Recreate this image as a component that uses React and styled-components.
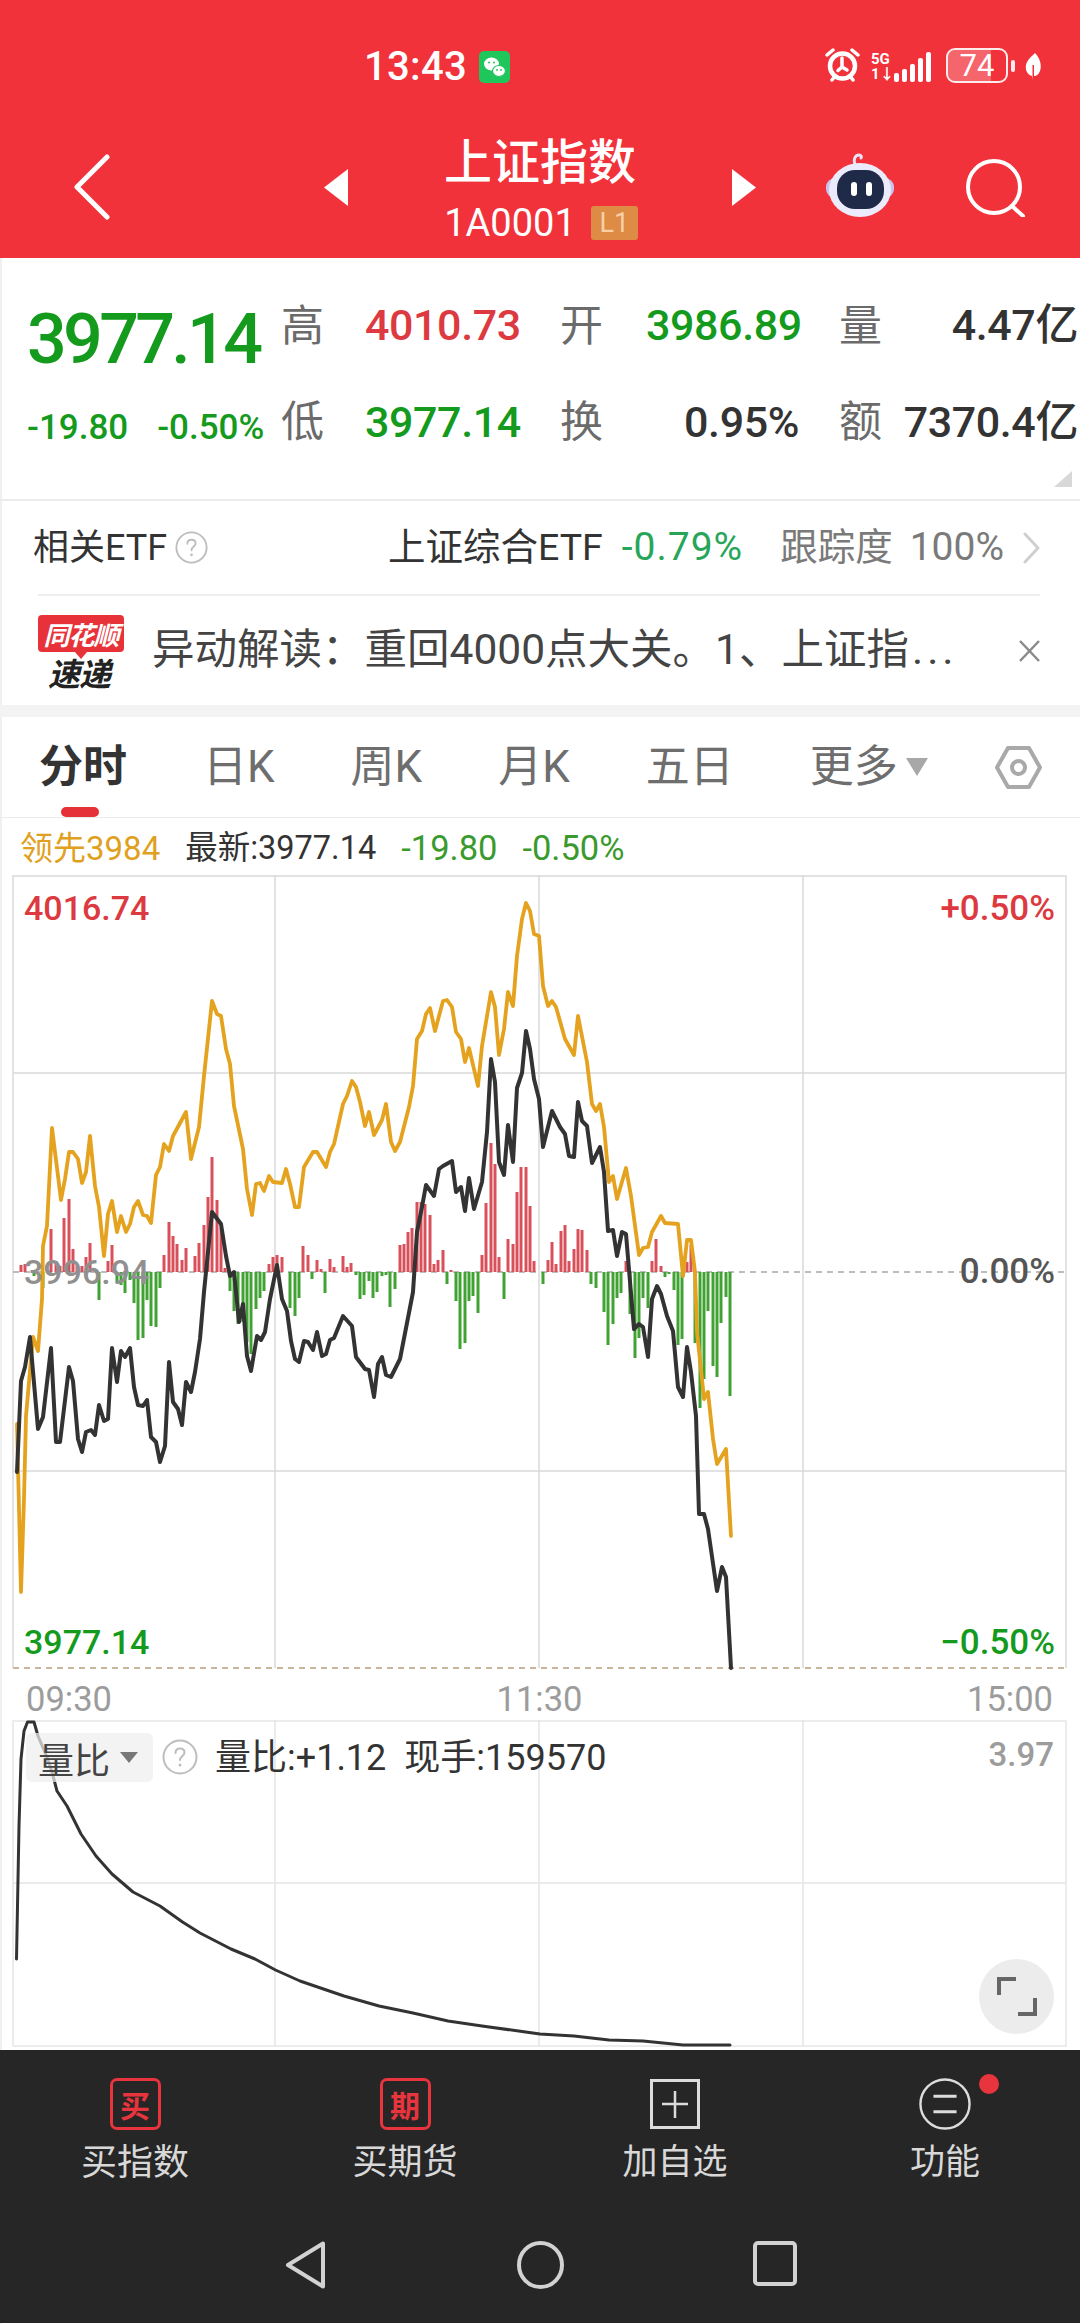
import React from "react";
import styled, { createGlobalStyle } from "styled-components";

const FONT = `Roboto, "Noto Sans CJK SC", sans-serif`;

const Global = createGlobalStyle`
  html, body { margin: 0; padding: 0; background: #fff; }
  body { font-family: ${FONT}; }
  * { box-sizing: border-box; }
`;

const GREEN = "#149a1c";
const RED = "#dc3a40";

const gold = "17,1425 21,1593 24,1500 26,1417 33,1338 38,1352 42,1300 43,1247 47,1227 52,1129 61,1201 65,1180 69,1153 73,1153 78,1160 82,1184 86,1173 90,1137 95,1187 99,1208 104,1257 108,1215 112,1202 117,1233 121,1217 126,1233 130,1225 134,1208 138,1202 143,1216 147,1217 151,1224 156,1176 160,1168 164,1145 169,1152 173,1137 186,1113 191,1160 199,1128 204,1077 212,1002 217,1015 221,1017 226,1050 230,1065 234,1107 243,1150 247,1190 252,1216 256,1185 260,1184 264,1192 269,1177 273,1183 282,1184 286,1170 290,1185 295,1208 299,1208 304,1168 313,1153 317,1153 326,1168 330,1153 334,1145 343,1105 347,1097 352,1082 356,1088 360,1103 365,1127 369,1113 374,1136 382,1121 386,1105 391,1143 395,1152 400,1143 409,1108 413,1087 417,1040 422,1032 426,1015 430,1009 435,1032 443,1002 447,1001 452,1008 456,1033 461,1040 465,1063 469,1049 478,1087 482,1047 491,993 495,1008 499,1056 504,1030 508,993 513,1007 517,957 522,920 526,904 530,912 534,935 539,937 543,987 548,1007 552,1002 556,1008 565,1040 574,1056 578,1017 587,1063 592,1105 596,1112 600,1105 604,1128 609,1183 613,1177 617,1200 626,1169 631,1197 639,1256 643,1249 648,1248 652,1233 661,1217 665,1224 678,1225 683,1277 687,1241 691,1241 695,1273 697,1333 702,1380 704,1400 708,1393 713,1440 717,1465 726,1450 731,1537";

const black = "17,1473 21,1382 25,1368 30,1338 38,1430 43,1418 51,1349 56,1443 60,1443 69,1368 73,1382 78,1440 82,1453 86,1433 91,1431 95,1436 99,1406 104,1422 108,1420 112,1349 117,1383 121,1352 125,1358 130,1349 134,1388 138,1406 143,1407 147,1401 151,1438 156,1443 160,1463 165,1447 169,1363 173,1403 178,1410 182,1426 186,1383 191,1393 195,1373 200,1340 204,1293 212,1213 221,1225 226,1257 230,1277 234,1273 239,1323 243,1305 247,1357 251,1372 257,1337 261,1341 265,1333 270,1300 277,1266 282,1300 287,1312 291,1342 295,1360 299,1363 304,1342 308,1343 313,1351 317,1333 322,1357 326,1355 330,1341 334,1339 343,1317 352,1327 356,1358 365,1370 369,1371 374,1398 378,1365 382,1358 386,1376 391,1378 400,1360 413,1293 417,1233 422,1208 426,1186 434,1197 439,1170 443,1167 452,1162 456,1193 461,1188 465,1212 469,1179 474,1210 482,1183 487,1133 491,1060 495,1083 499,1163 504,1176 508,1126 513,1163 517,1089 522,1074 526,1032 530,1050 534,1080 539,1100 543,1148 552,1112 560,1128 565,1135 569,1157 574,1158 578,1103 582,1122 587,1127 592,1164 600,1148 604,1173 608,1232 613,1231 617,1257 622,1233 626,1235 634,1330 639,1325 643,1328 648,1358 652,1300 657,1287 661,1295 667,1317 673,1332 678,1388 683,1398 687,1348 691,1373 696,1417 699,1515 704,1515 708,1530 717,1592 722,1568 726,1578 731,1669";

const ratio = "16.5,1960 19,1827 21,1760 24,1732 27.5,1723 34,1723 38,1737 46.5,1757 52,1773 57,1792 67,1807 81,1835 96,1857 112,1875 133,1893 160,1907 182.5,1923 200,1934 231,1950 255,1960 275.5,1971 300,1982 344,1997 379,2007 413,2014 448,2022 482,2027 540,2035 574,2037 609,2041 643,2042 683,2046 730,2046";

const bars = [
  [21,7],[25,8],[34,-4],[43,-16],[51,43],[56,11],[60,6],[64,54],[69,73],[73,23],[77,6],[82,6],[86,15],[90,29],[95,3],[99,-28],[108,11],[112,27],[117,-11],[121,-13],[125,-21],[130,-8],[134,-31],[138,-68],[143,-66],[147,-28],[151,-54],[156,-55],[160,-16],[164,17],[169,50],[173,36],[177,28],[182,12],[186,24],[195,16],[199,29],[204,47],[208,75],[212,115],[217,72],[221,44],[225,4],[230,-19],[234,-39],[238,-52],[243,-50],[247,-70],[251,-82],[256,-37],[260,-26],[264,-19],[269,8],[273,15],[277,17],[282,15],[290,-36],[295,-44],[299,-26],[303,26],[308,17],[312,-7],[317,12],[321,3],[325,-21],[330,13],[334,5],[343,16],[347,5],[351,9],[356,-3],[360,-27],[364,-23],[369,-9],[373,-26],[377,-20],[382,-4],[386,-3],[390,-35],[395,-17],[400,27],[404,28],[408,40],[412,44],[417,70],[421,70],[425,68],[430,57],[434,8],[438,12],[443,22],[447,-12],[451,2],[456,-29],[460,-77],[465,-71],[469,-29],[473,-24],[478,-41],[482,17],[486,69],[491,129],[495,108],[499,15],[504,-27],[508,33],[513,28],[517,80],[521,105],[526,105],[530,66],[534,11],[543,-12],[548,12],[552,30],[556,8],[561,41],[565,47],[569,11],[574,23],[578,43],[582,42],[587,22],[591,-12],[596,-16],[604,-40],[608,-73],[613,-52],[617,-26],[621,-21],[626,11],[630,-42],[635,-86],[639,-66],[643,-26],[648,-36],[652,11],[656,33],[661,6],[665,-5],[669,-2],[674,-18],[678,-73],[682,-67],[687,10],[691,27],[695,-71],[700,-136],[704,-107],[708,-39],[713,-94],[717,-105],[721,-51],[726,-25],[730,-124],
];

const Page = styled.div`
  width: 1080px;
  height: 2324px;
  display: flex;
  flex-direction: column;
  background: #fff;
  overflow: hidden;
  box-shadow: inset 2px 0 0 #f0f0f0;
`;
const Header = styled.header`
  height: 258px;
  flex: none;
  background: #f1323b;
  color: #fff;
`;
const StatusBar = styled.div`
  height: 118px;
  display: flex;
  align-items: flex-start;
  padding: 47px 39px 0 364px;
`;
const Clock = styled.span`
  font: 500 40px/40px ${FONT};
  letter-spacing: 0.3px;
`;
const StatusLeftIcon = styled.svg`
  margin: 4px 0 0 12px;
`;
const StatusRight = styled.div`
  margin-left: auto;
  display: flex;
  align-items: flex-start;
`;
const NetStack = styled.div`
  display: flex;
  flex-direction: column;
  width: 22px;
  margin: 5px 0 0 11px;
  font: 700 15px/15px ${FONT};
`;
const SignalIcon = styled.svg`
  margin: 4px 0 0 -2px;
`;
const Battery = styled.div`
  position: relative;
  margin: 1px 0 0 13px;
  width: 62px;
  height: 35px;
  border: 2.5px solid rgba(255, 255, 255, 0.9);
  border-radius: 9px;
  display: flex;
  align-items: center;
  justify-content: center;
  font: 400 31px/1 ${FONT};
  overflow: hidden;
`;
const BatteryFill = styled.i`
  position: absolute;
  left: 0;
  top: 0;
  bottom: 0;
  background: rgba(255, 255, 255, 0.25);
`;
const BatteryText = styled.span`
  position: relative;
`;
const BatteryTip = styled.i`
  width: 4px;
  height: 12px;
  margin: 13px 0 0 3px;
  background: rgba(255, 255, 255, 0.9);
  border-radius: 2px;
`;
const LeafIcon = styled.svg`
  margin: 6px 0 0 10px;
`;
const NavBar = styled.div`
  height: 140px;
  display: grid;
  grid-template-columns: 324px 432px 324px;
`;
const BackCell = styled.div`
  padding: 36px 0 0 72px;
`;
const CenterCell = styled.div`
  display: flex;
  justify-content: space-between;
  align-items: flex-start;
`;
const Arrow = styled.svg`
  margin-top: 51px;
`;
const TitleBlock = styled.div`
  display: flex;
  flex-direction: column;
  align-items: center;
  padding-top: 11px;
`;
const Title = styled.div`
  font: 500 48px/58px "Noto Sans CJK SC", sans-serif;
`;
const CodeRow = styled.div`
  display: flex;
  align-items: center;
  gap: 15px;
  margin-top: 19px;
  height: 34px;
  padding-left: 2px;
`;
const Code = styled.span`
  font: 400 38px/34px ${FONT};
`;
const LevelBadge = styled.span`
  width: 47px;
  height: 34px;
  border-radius: 3px;
  background: #dd8b45;
  color: #f7cfa8;
  font: 400 27px/34px ${FONT};
  text-align: center;
`;
const ActionCell = styled.div`
  display: flex;
  align-items: flex-start;
  gap: 71px;
  padding: 34px 0 0 69px;
`;
const SearchIcon = styled.svg`
  margin-top: 7px;
`;

const Quote = styled.section`
  height: 243px;
  flex: none;
  position: relative;
  border-bottom: 2px solid #ececec;
  padding: 20px 0 0 27px;
  display: grid;
  grid-template-columns: 255px 83px 196px 85px 194px 60px 180px;
  grid-template-rows: 95px 98px;
  align-items: center;
`;
const BigPrice = styled.div`
  font: 500 70px/1 ${FONT};
  letter-spacing: -3.7px;
  color: ${GREEN};
  margin-top: 26px;
`;
const Deltas = styled.div`
  display: flex;
  gap: 29px;
  margin-top: 10px;
`;
const Delta = styled.span`
  font: 500 35px/1 ${FONT};
  color: ${GREEN};
`;
const FieldLabel = styled.div`
  font: 400 43px/1 "Noto Sans CJK SC", sans-serif;
  color: #6b6b6b;
  margin: -7px 0 0 -1px;
`;
const FieldValue = styled.div`
  font: 500 43px/1 ${FONT};
  letter-spacing: -0.4px;
  color: ${(p) => p.$color};
  text-align: ${(p) => (p.$left ? "left" : "right")};
  padding-right: ${(p) => p.$pr}px;
`;
const CornerMark = styled.svg`
  position: absolute;
  right: 8px;
  bottom: 12px;
`;

const EtfRow = styled.div`
  height: 93px;
  flex: none;
  display: flex;
  align-items: center;
  padding: 0 40px 0 33px;
  font: 400 36px/1 ${FONT};
  color: #333;
`;
const HelpIcon = styled.svg`
  margin-left: 8px;
  flex: none;
`;
const EtfRight = styled.div`
  margin-left: auto;
  display: flex;
  align-items: center;
  font-size: 37.5px;
`;
const EtfChange = styled.span`
  color: #27a65a;
  margin-left: 19px;
  font-size: 39px;
  letter-spacing: 1px;
`;
const EtfMuted = styled.span`
  color: #7a7a7a;
  margin-left: ${(p) => p.$ml}px;
  font-size: ${(p) => p.$size}px;
`;
const EtfChevron = styled.svg`
  margin-left: 19px;
`;
const Divider = styled.div`
  height: 2px;
  flex: none;
  margin: 0 40px 0 38px;
  background: #eeeeee;
`;
const NewsRow = styled.div`
  height: 109px;
  flex: none;
  display: flex;
  align-items: center;
  padding: 0 39px 0 38px;
`;
const Logo = styled.div`
  width: 86px;
  height: 71px;
  flex: none;
  display: flex;
  flex-direction: column;
  align-items: center;
  position: relative;
`;
const LogoBanner = styled.div`
  width: 86px;
  height: 37px;
  border-radius: 4px;
  background: #e8323a;
  color: #fff;
  font: italic 700 26px/37px "Noto Sans CJK SC", sans-serif;
  text-align: center;
  letter-spacing: -1px;
`;
const LogoTail = styled.i`
  width: 0;
  height: 0;
  border-left: 6px solid transparent;
  border-right: 6px solid transparent;
  border-top: 7px solid #e8323a;
`;
const LogoSub = styled.div`
  font: italic 700 32px/27px "Noto Sans CJK SC", sans-serif;
  color: #222;
  letter-spacing: -1px;
  margin-right: 4px;
`;
const NewsText = styled.div`
  margin-left: 28px;
  font: 400 42.5px/1 ${FONT};
  color: #444;
  white-space: nowrap;
`;
const NewsDots = styled.span`
  letter-spacing: 4px;
  margin-left: 3px;
`;
const NewsClose = styled.svg`
  margin-left: auto;
`;
const Band = styled.div`
  height: 12px;
  flex: none;
  background: #f3f3f3;
`;

const Tabs = styled.nav`
  height: 101px;
  flex: none;
  display: flex;
  align-items: center;
  padding: 0 38px 0 39px;
  border-bottom: 1px solid #ebebeb;
`;
const TabList = styled.div`
  display: flex;
  align-items: center;
  gap: 76px;
`;
const Tab = styled.span`
  font: ${(p) => (p.$active ? 700 : 400)} 44px/1 ${FONT};
  color: ${(p) => (p.$active ? "#333" : "#6e6e6e")};
  position: relative;
  white-space: nowrap;
  display: flex;
  align-items: center;
`;
const TabMark = styled.i`
  position: absolute;
  left: 22px;
  bottom: -28px;
  width: 38px;
  height: 10px;
  border-radius: 5px;
  background: #e53238;
`;
const MoreCaret = styled.i`
  width: 0;
  height: 0;
  margin: 0 0 0 8px;
  border-left: 11px solid transparent;
  border-right: 11px solid transparent;
  border-top: 18px solid #a8a8a8;
`;
const HexIcon = styled.svg`
  margin-left: auto;
  flex: none;
`;
const Legend = styled.div`
  height: 57px;
  flex: none;
  display: flex;
  align-items: center;
  gap: 25px;
  padding: 4px 0 0 20px;
  font: 400 33px/1 ${FONT};
`;
const LegendItem = styled.span`
  color: ${(p) => p.$color};
  font-size: ${(p) => p.$size || 33}px;
`;

const ChartBox = styled.div`
  position: relative;
  flex: none;
  height: ${(p) => p.$h}px;
`;
const ChartSvg = styled.svg`
  display: block;
`;
const ChartLabel = styled.span`
  position: absolute;
  top: ${(p) => p.$top}px;
  ${(p) => (p.$right !== undefined ? `right: ${p.$right}px;` : `left: ${p.$left}px;`)}
  font: 500 ${(p) => p.$size || 34}px/1 ${FONT};
  color: ${(p) => p.$color};
`;
const TimeAxis = styled.div`
  height: 41px;
  flex: none;
  display: grid;
  grid-template-columns: 1fr 1fr 1fr;
  padding: 1px 27px 0 26px;
  font: 400 34.5px/38px ${FONT};
  color: #9c9c9c;
`;
const TimeTick = styled.span`
  text-align: ${(p) => p.$align};
`;
const RatioPill = styled.div`
  position: absolute;
  left: 26px;
  top: 13px;
  width: 127px;
  height: 49px;
  border-radius: 6px;
  background: rgba(238, 238, 238, 0.72);
  display: flex;
  align-items: center;
  padding-left: 12px;
  font: 400 36px/1 "Noto Sans CJK SC", sans-serif;
  color: #444;
`;
const PillCaret = styled.i`
  width: 0;
  height: 0;
  margin-left: 10px;
  border-left: 9px solid transparent;
  border-right: 9px solid transparent;
  border-top: 11px solid #777;
`;
const RatioHelp = styled.svg`
  position: absolute;
  left: 162px;
  top: 19px;
`;
const RatioText = styled.div`
  position: absolute;
  left: 215px;
  top: 20px;
  display: flex;
  gap: 18px;
  font: 400 36px/36px ${FONT};
  color: #333;
`;
const ExpandButton = styled.div`
  position: absolute;
  left: 979px;
  top: 239px;
  width: 75px;
  height: 75px;
  border-radius: 50%;
  background: #ececec;
  display: flex;
  align-items: center;
  justify-content: center;
`;

const Dock = styled.footer`
  height: 273px;
  flex: none;
  background: #262626;
  color: #d8d8d8;
`;
const DockActions = styled.div`
  height: 179px;
  display: grid;
  grid-template-columns: repeat(4, 270px);
  padding-top: 28px;
`;
const DockItem = styled.div`
  display: flex;
  flex-direction: column;
  align-items: center;
  position: relative;
`;
const BuyBox = styled.div`
  width: 51px;
  height: 52px;
  margin-bottom: 9px;
  border: 3.5px solid #e8343c;
  border-radius: 7px;
  color: #e8343c;
  display: flex;
  align-items: center;
  justify-content: center;
  font: 700 30px/1 "Noto Sans CJK SC", sans-serif;
`;
const DockIcon = styled.svg`
  margin-bottom: 9px;
`;
const DockLabel = styled.div`
  font: 400 ${(p) => p.$size || 35}px/40px "Noto Sans CJK SC", sans-serif;
`;
const Dot = styled.i`
  position: absolute;
  left: 169px;
  top: -4px;
  width: 20px;
  height: 20px;
  border-radius: 50%;
  background: #e8343c;
`;
const SystemNav = styled.div`
  height: 94px;
  display: grid;
  grid-template-columns: 235px 235px 235px;
  justify-content: center;
  justify-items: center;
  align-items: start;
  padding-top: 12px;
`;

const polyProps = { fill: "none", strokeLinejoin: "round", strokeLinecap: "round" };
const xs = [275, 539, 803];

function MainChart() {
  return (
    <ChartSvg width="1080" height="804" viewBox="0 876 1080 804">
      <g stroke="#e2e2e2" strokeWidth="2" fill="none">
        <path d="M13 1669V877H1066V1669" />
      </g>
      <g stroke="#d9d9d9" strokeWidth="1.5">
        {xs.map((x) => <line key={x} x1={x} x2={x} y1="876" y2="1669" />)}
        <line x1="13" x2="1066" y1="1074" y2="1074" />
        <line x1="13" x2="1066" y1="1472" y2="1472" />
      </g>
      <line x1="13" x2="1066" y1="1273" y2="1273" stroke="#a8a8a8" strokeWidth="1.5" strokeDasharray="6 5" />
      <line x1="13" x2="1066" y1="1669" y2="1669" stroke="#c9b59c" strokeWidth="2" strokeDasharray="6 5" />
      {bars.map(([x, h]) => (
        <line
          key={x}
          x1={x}
          x2={x}
          y1={1273}
          y2={1273 - h}
          stroke={h > 0 ? "#d8505a" : "#3fa233"}
          strokeWidth="3"
        />
      ))}
      <polyline points={gold} stroke="#e4a21e" strokeWidth="3.8" {...polyProps} />
      <polyline points={black} stroke="#333" strokeWidth="4" {...polyProps} />
    </ChartSvg>
  );
}

function HelpCircle({ size, as: Comp, color }) {
  return (
    <Comp width={size} height={size} viewBox="0 0 36 36" fill="none">
      <circle cx="18" cy="18" r="16.5" stroke={color} strokeWidth="2" />
      <path d="M13.5 14c0-3 2-4.500 4.500-4.500s4.500 1.500 4.500 4c0 3.500-4.500 3.500-4.500 7.500" stroke={color} strokeWidth="2" strokeLinecap="round" />
      <circle cx="18" cy="26" r="1.500" fill={color} />
    </Comp>
  );
}

export default function App() {
  return (
    <Page>
      <Global />
      <Header>
        <StatusBar>
          <Clock>13:43</Clock>
          <StatusLeftIcon width="31" height="32" viewBox="0 0 31 32">
            <rect width="31" height="32" rx="5" fill="#1fc65c" />
            <ellipse cx="12.500" cy="13" rx="7.500" ry="6.500" fill="#fff" />
            <ellipse cx="20" cy="20" rx="6.500" ry="5.500" fill="#fff" stroke="#1fc65c" strokeWidth="1.200" />
            <circle cx="10" cy="11.500" r="1" fill="#1fc65c" />
            <circle cx="15" cy="11.500" r="1" fill="#1fc65c" />
            <circle cx="18" cy="19" r="0.900" fill="#1fc65c" />
            <circle cx="22" cy="19" r="0.900" fill="#1fc65c" />
          </StatusLeftIcon>
          <StatusRight>
            <svg width="35" height="35" viewBox="0 0 35 35" fill="none">
              <circle cx="17.500" cy="19" r="12.500" stroke="#fff" strokeWidth="4.500" />
              <path d="M17 11v9l-4 3.500M17 20l5 3" stroke="#fff" strokeWidth="3.500" strokeLinecap="round" />
              <path d="M2 8l6-5M33 8l-6-5M7 33l3-4M28 33l-3-4" stroke="#fff" strokeWidth="3.500" strokeLinecap="round" />
            </svg>
            <NetStack>
              <span>5G</span>
              <span>1↓</span>
            </NetStack>
            <SignalIcon width="42" height="32" viewBox="0 0 42 32" fill="#fff">
              <rect x="3" y="22" width="5" height="9" rx="2" />
              <rect x="11" y="18" width="5" height="13" rx="2" />
              <rect x="19" y="13" width="5" height="18" rx="2" />
              <rect x="27" y="7" width="5" height="24" rx="2" />
              <rect x="35" y="1" width="5" height="30" rx="2" />
            </SignalIcon>
            <Battery>
              <BatteryFill style={{ width: "74%" }} />
              <BatteryText>74</BatteryText>
            </Battery>
            <BatteryTip />
            <LeafIcon width="16" height="27" viewBox="0 0 16 27" fill="#fff">
              <path d="M10 0c5 5 7 12 5 18-1.500 4-4 5-6 5V12l-1.500 0V27L7 23C3 22 0 18 1 12 2 7 7 3 10 0z" />
            </LeafIcon>
          </StatusRight>
        </StatusBar>
        <NavBar>
          <BackCell>
            <svg width="40" height="66" viewBox="0 0 40 66" fill="none">
              <path d="M35 3L5 33l30 30" stroke="#fff" strokeWidth="5" strokeLinecap="round" strokeLinejoin="round" />
            </svg>
          </BackCell>
          <CenterCell>
            <Arrow width="24" height="37" viewBox="0 0 24 37"><path d="M24 0v37L0 18.500z" fill="#fff" /></Arrow>
            <TitleBlock>
              <Title>上证指数</Title>
              <CodeRow>
                <Code>1A0001</Code>
                <LevelBadge>L1</LevelBadge>
              </CodeRow>
            </TitleBlock>
            <Arrow width="24" height="37" viewBox="0 0 24 37"><path d="M0 0v37l24-18.500z" fill="#fff" /></Arrow>
          </CenterCell>
          <ActionCell>
            <svg width="70" height="66" viewBox="0 0 70 66" fill="none">
              <path d="M30 12c-2-4 0-9 4-9 2 0 3 2 2 3" stroke="#e9e4f7" strokeWidth="3" strokeLinecap="round" />
              <rect x="1" y="26" width="68" height="20" rx="9" fill="#c9c3ee" />
              <ellipse cx="35" cy="38" rx="31" ry="27" fill="#ecebfb" />
              <rect x="12" y="18" width="47" height="39" rx="18" fill="#1f2a48" />
              <rect x="26" y="30" width="6" height="14" rx="3" fill="#fff" />
              <rect x="41" y="30" width="6" height="14" rx="3" fill="#fff" />
            </svg>
            <SearchIcon width="60" height="58" viewBox="0 0 60 58" fill="none">
              <circle cx="28" cy="28" r="26" stroke="#fff" strokeWidth="4" />
              <path d="M46 47l11 10" stroke="#fff" strokeWidth="4" strokeLinecap="round" />
            </SearchIcon>
          </ActionCell>
        </NavBar>
      </Header>

      <Quote>
        <BigPrice>3977.14</BigPrice>
        <FieldLabel>高</FieldLabel>
        <FieldValue $left $color="#dc3a40">4010.73</FieldValue>
        <FieldLabel>开</FieldLabel>
        <FieldValue $pr={41} $color={GREEN}>3986.89</FieldValue>
        <FieldLabel>量</FieldLabel>
        <FieldValue $pr={2} $color="#333">4.47亿</FieldValue>
        <Deltas>
          <Delta>-19.80</Delta>
          <Delta>-0.50%</Delta>
        </Deltas>
        <FieldLabel>低</FieldLabel>
        <FieldValue $left $color={GREEN}>3977.14</FieldValue>
        <FieldLabel>换</FieldLabel>
        <FieldValue $pr={41} $color="#333">0.95%</FieldValue>
        <FieldLabel>额</FieldLabel>
        <FieldValue $pr={2} $color="#333">7370.4亿</FieldValue>
        <CornerMark width="18" height="16" viewBox="0 0 18 16"><path d="M18 0v16H0z" fill="#d8d8d8" /></CornerMark>
      </Quote>

      <EtfRow>
        相关ETF
        <HelpCircle size={33} as={HelpIcon} color="#bdbdbd" />
        <EtfRight>
          上证综合ETF
          <EtfChange>-0.79%</EtfChange>
          <EtfMuted $ml={37} $size={37.5}>跟踪度</EtfMuted>
          <EtfMuted $ml={17} $size={39}>100%</EtfMuted>
          <EtfChevron width="17" height="32" viewBox="0 0 17 32" fill="none">
            <path d="M2 2l13 14L2 30" stroke="#cfcfcf" strokeWidth="3" strokeLinecap="round" strokeLinejoin="round" />
          </EtfChevron>
        </EtfRight>
      </EtfRow>
      <Divider />
      <NewsRow>
        <Logo>
          <LogoBanner>同花顺</LogoBanner>
          <LogoTail />
          <LogoSub>速递</LogoSub>
        </Logo>
        <NewsText>异动解读：重回4000点大关。1、上证指<NewsDots>...</NewsDots></NewsText>
        <NewsClose width="23" height="22" viewBox="0 0 23 22" fill="none">
          <path d="M2 1l19 20M21 1L2 21" stroke="#8a8a8a" strokeWidth="2.500" />
        </NewsClose>
      </NewsRow>
      <Band />

      <Tabs>
        <TabList>
          <Tab $active>分时<TabMark /></Tab>
          <Tab>日K</Tab>
          <Tab>周K</Tab>
          <Tab>月K</Tab>
          <Tab>五日</Tab>
          <Tab>更多<MoreCaret /></Tab>
        </TabList>
        <HexIcon width="47" height="45" viewBox="0 0 47 45" fill="none">
          <path d="M13 3h21l11 19.500L34 42H13L2 22.500z" stroke="#a9a9a9" strokeWidth="4" strokeLinejoin="round" />
          <circle cx="23.500" cy="22.500" r="6.500" stroke="#a9a9a9" strokeWidth="4" />
        </HexIcon>
      </Tabs>
      <Legend>
        <LegendItem $color="#e0a020">领先3984</LegendItem>
        <LegendItem $color="#333" $size={32.5}>最新:3977.14</LegendItem>
        <LegendItem $color="#3a9a2e" $size={34.5}>-19.80</LegendItem>
        <LegendItem $color="#3a9a2e" $size={34.5}>-0.50%</LegendItem>
      </Legend>

      <ChartBox $h={804}>
        <MainChart />
        <ChartLabel $top={16} $left={24} $color={RED}>4016.74</ChartLabel>
        <ChartLabel $top={16} $right={25} $size={35} $color={RED}>+0.50%</ChartLabel>
        <ChartLabel $top={380} $left={24} $color="#909090">3996.94</ChartLabel>
        <ChartLabel $top={379} $right={25} $size={35} $color="#555">0.00%</ChartLabel>
        <ChartLabel $top={750} $left={24} $color={GREEN}>3977.14</ChartLabel>
        <ChartLabel $top={750} $right={25} $size={35} $color={GREEN}>−0.50%</ChartLabel>
      </ChartBox>
      <TimeAxis>
        <TimeTick $align="left">09:30</TimeTick>
        <TimeTick $align="center">11:30</TimeTick>
        <TimeTick $align="right">15:00</TimeTick>
      </TimeAxis>
      <ChartBox $h={330}>
        <ChartSvg width="1080" height="330" viewBox="0 1721 1080 330">
          <path d="M13 2047V1722H1066V2047H13" stroke="#ececec" strokeWidth="2" fill="none" />
          <g stroke="#e4e4e4" strokeWidth="1.500">
            {xs.map((x) => <line key={x} x1={x} x2={x} y1="1721" y2="2047" />)}
            <line x1="13" x2="1066" y1="1884" y2="1884" />
          </g>
          <polyline points={ratio} stroke="#333" strokeWidth="3" {...polyProps} />
        </ChartSvg>
        <RatioPill>量比<PillCaret /></RatioPill>
        <HelpCircle size={36} as={RatioHelp} color="#bdbdbd" />
        <RatioText>
          <span>量比:+1.12</span>
          <span>现手:159570</span>
        </RatioText>
        <ChartLabel $top={18} $right={26} $size={33} $color="#9c9c9c">3.97</ChartLabel>
        <ExpandButton>
          <svg width="40" height="39" viewBox="0 0 40 39" fill="none">
            <path d="M2 18V2h17M38 21v16H21" stroke="#666" strokeWidth="4" />
          </svg>
        </ExpandButton>
      </ChartBox>

      <Dock>
        <DockActions>
          <DockItem>
            <BuyBox>买</BuyBox>
            <DockLabel $size={36}>买指数</DockLabel>
          </DockItem>
          <DockItem>
            <BuyBox>期</BuyBox>
            <DockLabel>买期货</DockLabel>
          </DockItem>
          <DockItem>
            <DockIcon width="50" height="52" viewBox="0 0 50 52" fill="none">
              <rect x="1.500" y="2.500" width="47" height="47" stroke="#dcdcdc" strokeWidth="3" />
              <path d="M25 13v27M12 26h26" stroke="#dcdcdc" strokeWidth="2.500" />
            </DockIcon>
            <DockLabel>加自选</DockLabel>
          </DockItem>
          <DockItem>
            <DockIcon width="54" height="52" viewBox="0 0 54 54" fill="none">
              <circle cx="27" cy="27" r="25.500" stroke="#dcdcdc" strokeWidth="2.500" />
              <path d="M15 19h24M15 35h24" stroke="#dcdcdc" strokeWidth="3" />
            </DockIcon>
            <DockLabel>功能</DockLabel>
            <Dot />
          </DockItem>
        </DockActions>
        <SystemNav>
          <svg width="41" height="48" viewBox="0 0 41 48" fill="none">
            <path d="M38 2.500v43L3 24z" stroke="#d2d2d2" strokeWidth="4" strokeLinejoin="round" />
          </svg>
          <svg width="47" height="48" viewBox="0 0 47 48" fill="none">
            <ellipse cx="23.500" cy="24" rx="21.500" ry="22" stroke="#d2d2d2" strokeWidth="4" />
          </svg>
          <svg width="44" height="45" viewBox="0 0 44 45" fill="none">
            <rect x="2" y="2" width="40" height="41" rx="3" stroke="#d2d2d2" strokeWidth="4" />
          </svg>
        </SystemNav>
      </Dock>
    </Page>
  );
}
